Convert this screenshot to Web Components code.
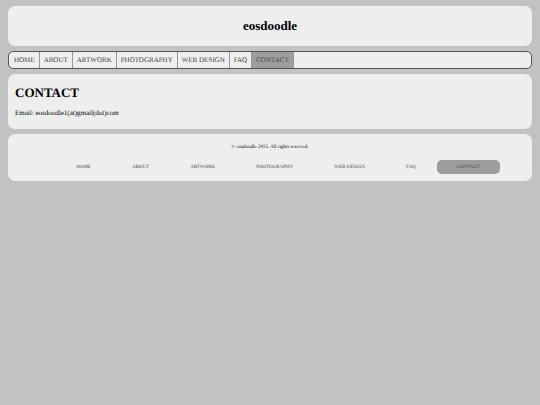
<!DOCTYPE html>
<html lang="en">
<head>
<meta charset="utf-8">
<title>eosdoodle - contact</title>
<style>
  body {
    background: #c2c2c2;
    color: #000;
    display: flex;
    flex-direction: column;
    font-family: "Liberation Serif", "Times New Roman", serif;
    font-size: 7px;
    gap: 5px;
    line-height: 8px;
    margin: 6px 8px;
    text-rendering: geometricPrecision;
  }
</style>
</head>
<body>
<site-header>eosdoodle</site-header>
<site-nav current="CONTACT"></site-nav>
<page-content heading="CONTACT">Email: eosdoodle1(at)gmail(dot)com</page-content>
<site-footer current="CONTACT">© eosdoodle 2025. All rights reserved.</site-footer>

<script>
const pages = ["HOME", "ABOUT", "ARTWORK", "PHOTOGRAPHY", "WEB DESIGN", "FAQ", "CONTACT"];

function pageLinks(current) {
  return pages
    .map((page) => {
      const active = page === current ? ' aria-current="page"' : "";
      return `<li><a href="#"${active}>${page}</a></li>`;
    })
    .join("");
}

class SiteHeader extends HTMLElement {
  connectedCallback() {
    this.attachShadow({ mode: "open" });
    this.shadowRoot.innerHTML = `
      <style>
        :host {
          background: #eee;
          border-radius: 7px;
          display: block;
          padding: 12px 7px;
        }

        h1 {
          font-size: 13px;
          line-height: 16px;
          margin: 0;
          text-align: center;
        }
      </style>
      <header><h1><slot></slot></h1></header>
    `;
  }
}

class SiteNav extends HTMLElement {
  connectedCallback() {
    this.attachShadow({ mode: "open" });
    this.shadowRoot.innerHTML = `
      <style>
        :host {
          background: #eee;
          border: 1px solid #555;
          border-radius: 5px;
          display: block;
          overflow: hidden;
        }

        ul {
          display: flex;
          list-style: none;
          margin: 0;
          padding: 0 0 0 1px;
        }

        li {
          border-right: 1px solid #999;
        }

        a {
          color: #444;
          display: block;
          padding: 4px;
          text-decoration: none;
        }

        a[aria-current] {
          background: #9d9d9d;
        }
      </style>
      <nav><ul>${pageLinks(this.getAttribute("current"))}</ul></nav>
    `;
  }
}

class PageContent extends HTMLElement {
  connectedCallback() {
    this.attachShadow({ mode: "open" });
    this.shadowRoot.innerHTML = `
      <style>
        :host {
          background: #eee;
          border-radius: 7px;
          display: block;
          padding: 11px 7px 12px;
        }

        h2 {
          font-size: 13px;
          line-height: 16px;
          margin: 0 0 8px;
        }

        p {
          margin: 0;
        }
      </style>
      <main>
        <h2>${this.getAttribute("heading")}</h2>
        <p><slot></slot></p>
      </main>
    `;
  }
}

class SiteFooter extends HTMLElement {
  connectedCallback() {
    this.attachShadow({ mode: "open" });
    this.shadowRoot.innerHTML = `
      <style>
        :host {
          background: #eee;
          border-radius: 7px;
          display: block;
          font-size: 5px;
          line-height: 6px;
          padding: 11px 7px 7px;
          text-align: center;
        }

        p {
          margin: 0 0 9px;
        }

        ul {
          display: flex;
          gap: 1px;
          justify-content: center;
          list-style: none;
          margin: 0;
          padding: 0 0 0 16px;
        }

        a {
          border-radius: 5px;
          color: #444;
          display: block;
          padding: 5px 20px 3px;
          text-decoration: none;
        }

        a[aria-current] {
          background: #9d9d9d;
        }
      </style>
      <footer>
        <p><slot></slot></p>
        <ul>${pageLinks(this.getAttribute("current"))}</ul>
      </footer>
    `;
  }
}

customElements.define("site-header", SiteHeader);
customElements.define("site-nav", SiteNav);
customElements.define("page-content", PageContent);
customElements.define("site-footer", SiteFooter);
</script>
</body>
</html>
